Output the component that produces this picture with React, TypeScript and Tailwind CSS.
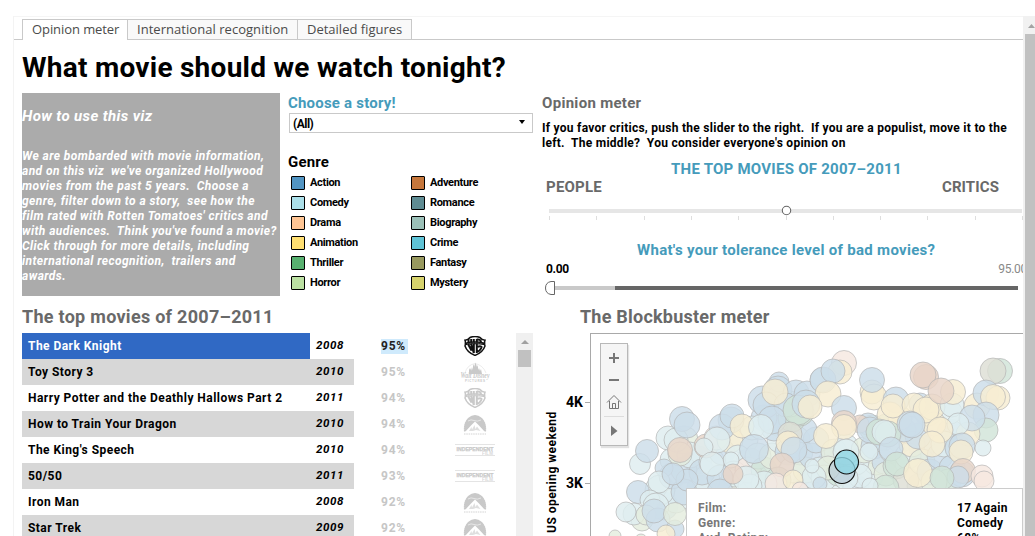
import type { ReactNode } from "react";

type Tone = "b" | "l" | "y" | "t" | "g" | "p" | "k" | "o";
type Bubble = [number, number, number, Tone];

const tones: Record<Tone, string> = {
  b: "#c6d9e6",
  l: "#dbebee",
  y: "#f7ebcd",
  t: "#e5cfc1",
  g: "#cbe1d3",
  p: "#e0eadb",
  k: "#f5e5dd",
  o: "#d9dacf",
};

const bubbles: Bubble[] = [
  // back layer
  [700, 488, 13, "b"], [728, 488, 13, "l"], [742, 486, 13, "p"], [756, 478, 13, "l"], [806, 484, 13, "b"],
  [830, 490, 13, "l"], [856, 488, 13, "b"], [870, 476, 13, "l"], [876, 462, 13, "p"], [900, 440, 13, "l"],
  [922, 448, 13, "b"], [920, 486, 13, "p"], [950, 432, 13, "b"], [880, 440, 13, "g"], [796, 440, 14, "l"],
  [782, 424, 14, "b"], [744, 440, 14, "l"], [750, 462, 14, "b"], [698, 460, 14, "b"], [706, 480, 14, "l"],
  [672, 460, 12, "l"], [684, 440, 14, "p"], [664, 506, 14, "b"], [676, 500, 13, "l"], [832, 462, 14, "b"],
  [660, 490, 15, "l"], [672, 476, 13, "b"], [684, 470, 13, "b"], [690, 455, 13, "l"], [702, 472, 13, "b"],
  [712, 462, 13, "l"], [722, 452, 13, "b"], [706, 446, 12, "t"], [716, 438, 12, "k"], [730, 440, 13, "y"],
  [738, 458, 13, "l"], [734, 474, 13, "l"], [720, 478, 13, "b"], [748, 470, 13, "k"], [758, 456, 13, "l"],
  [764, 470, 13, "g"], [772, 456, 13, "p"], [780, 440, 13, "l"], [774, 428, 13, "b"], [764, 418, 13, "b"],
  [752, 428, 12, "l"], [788, 452, 13, "b"], [792, 470, 13, "l"], [800, 452, 13, "b"], [806, 470, 13, "p"],
  [812, 456, 13, "b"], [820, 470, 13, "l"], [816, 440, 13, "b"], [804, 430, 13, "b"], [792, 418, 14, "g"],
  [800, 412, 14, "g"], [824, 478, 13, "l"], [834, 452, 13, "p"], [846, 446, 12, "l"], [838, 474, 12, "g"],
  [856, 462, 13, "l"], [864, 450, 13, "p"], [860, 476, 12, "l"], [874, 446, 13, "b"], [884, 462, 12, "b"],
  [886, 474, 12, "p"], [892, 450, 13, "l"], [896, 466, 13, "g"], [908, 456, 13, "l"], [912, 444, 13, "y"],
  [906, 480, 13, "o"], [922, 462, 13, "p"], [930, 472, 13, "b"], [940, 456, 13, "b"], [944, 444, 13, "l"],
  [952, 468, 13, "b"], [948, 482, 13, "g"], [962, 474, 13, "b"], [958, 448, 13, "b"], [934, 482, 13, "p"],
  [918, 436, 13, "b"], [904, 430, 12, "b"], [886, 426, 12, "g"], [872, 428, 13, "g"], [868, 424, 11, "b"],
  [860, 424, 9, "t"], [846, 478, 12, "l"], [778, 480, 13, "g"], [764, 484, 13, "l"], [750, 486, 12, "l"],
  [720, 492, 13, "b"], [684, 492, 13, "b"], [900, 418, 12, "y"], [928, 412, 14, "p"], [950, 412, 12, "l"],
  [934, 424, 12, "y"], [762, 400, 14, "b"], [780, 398, 13, "b"], [790, 404, 13, "l"],
  // upper and left edges
  [779, 382, 10, "b"], [778, 390, 14, "b"], [796, 393, 13, "b"], [807, 394, 13, "b"], [766, 405, 13, "b"],
  [786, 405, 12, "b"], [772, 420, 14, "b"], [798, 410, 15, "g"], [775, 392, 13, "y"], [822, 380, 12, "b"],
  [844, 363, 12.5, "k"], [840, 372, 12, "y"], [823, 380, 13, "b"], [833, 371, 12, "b"], [828, 394, 13, "y"],
  [806, 404, 14, "b"], [810, 407, 12, "y"], [844, 408, 12.5, "b"], [844, 423, 12.5, "t"], [844, 427, 12.5, "y"],
  [826, 436, 12.5, "y"], [872, 392, 12, "y"], [874, 397, 13, "y"], [872, 380, 12.5, "b"],
  [896, 400, 13, "b"], [890, 415, 13, "y"], [893, 406, 12, "y"], [920, 404, 11, "b"], [914, 405, 12, "y"],
  [932, 407, 13, "y"], [926, 410, 13, "y"], [952, 405, 12, "l"], [953, 392, 12.5, "y"], [926, 377, 12.5, "t"],
  [923, 375, 13, "t"], [941, 391, 13, "t"], [1000, 371, 12.5, "g"], [993, 371, 13, "o"], [977, 406, 13, "y"],
  [986, 393, 13, "b"], [998, 398, 12, "y"], [993, 397, 12.5, "y"], [986, 415, 13, "b"], [986, 430, 12, "g"],
  [968, 434, 12, "y"], [972, 418, 13, "b"], [958, 424, 11, "l"], [962, 446, 13, "b"], [961, 452, 12, "y"],
  [983, 448, 8, "l"], [963, 471, 12.5, "t"], [958, 477, 11, "b"], [982, 476, 11, "k"], [984, 481, 10, "k"],
  // dense middle
  [870, 430, 13, "b"], [879, 432, 13, "g"], [888, 434, 13, "g"], [884, 432, 12, "l"], [910, 424, 13, "b"],
  [912, 425, 13, "b"], [940, 430, 13, "y"], [932, 444, 13, "y"], [891, 449, 12, "b"], [897, 464, 12, "g"],
  [869, 452, 9, "l"], [918, 473, 14.5, "y"], [942, 478, 12, "g"], [886, 488, 13, "g"], [846, 452, 13, "l"],
  [828, 468, 12, "p"], [814, 477, 12, "l"], [731, 420, 13, "b"], [722, 427, 13, "b"], [732, 416, 12, "b"],
  [742, 426, 12, "y"], [761, 427, 12.5, "l"], [790, 434, 12, "o"], [788, 443, 12, "y"], [794, 450, 13, "b"],
  [754, 449, 14.5, "b"], [782, 465, 12, "t"], [776, 484, 11, "k"], [793, 480, 10, "y"], [746, 479, 13, "l"],
  [717, 440, 13, "l"], [704, 447, 9, "l"], [731, 460, 8, "l"], [712, 464, 12, "l"], [733, 474, 10, "t"],
  [668, 438, 12, "l"], [676, 440, 12, "l"], [682, 419, 12.5, "b"], [687, 425, 13, "b"], [680, 454, 12, "p"],
  [680, 450, 12.5, "t"], [640, 464, 10.5, "l"], [647, 451, 11.5, "b"], [664, 468, 9, "b"], [687, 480, 11, "b"],
  [659, 482, 11, "l"], [673, 474, 11, "b"], [638, 492, 11.5, "b"], [650, 500, 10, "l"], [656, 506, 13, "l"],
  [642, 520, 11, "p"], [634, 514, 11, "l"], [626, 512, 10, "l"], [646, 515, 10, "p"], [658, 520, 12, "b"],
  [654, 511, 12, "b"], [675, 529, 9, "b"], [675, 514, 11.5, "p"], [666, 534, 9, "y"], [615, 536, 6, "p"],
  [641, 540, 6, "p"], [812, 466, 7, "l"], [820, 484, 7, "b"], [870, 486, 8, "l"], [800, 490, 8, "k"],
];

const studios = {
  warner: (tone: string) => (
    <svg viewBox="0 0 22 20" className={`h-5 w-[22px] ${tone}`} fill="none" stroke="currentColor">
      <path d="M1 4.300Q4.200 4.200 6 1.500Q11-.5 16 1.500Q17.800 4.200 21 4.300Q20 7 21 10Q18.800 16.500 11 19.400Q3.200 16.500 1 10Q2 7 1 4.300Z" strokeWidth="1.500" />
      <path d="M4.500 3V9L7.500 14.500V9L9.800 17V3M7.200 3V9" strokeWidth="2" />
      <path d="M12.800 3V17M12.800 3.500Q17 3 17 6.500M12.800 11Q18 9.500 17.500 11.500Q16.500 14.500 12.800 16" strokeWidth="2" />
      <path d="M1 8Q11 5.500 21 8" strokeWidth="2.800" />
      <path d="M3 8Q11 6 19 8" stroke="#fff" strokeWidth=".6" strokeDasharray="1 .6" opacity=".6" />
    </svg>
  ),
  disney: (tone: string) => (
    <svg viewBox="0 0 30 20" className={`h-5 w-[30px] ${tone}`} fill="currentColor">
      <path d="M5 11Q7 3 15 1.500Q23 3 26 11" fill="none" stroke="currentColor" strokeWidth=".6" opacity=".6" />
      <path d="M9 12V8L10 6L11 8V9L12 5L13 8V4L14 2V5L15.500 .5L17 5V3L18 5V8L19 6L20 9L21 7L22 12Z" />
      <text x=".5" y="16" fontSize="7.500" fontWeight="bold" fontStyle="italic" textLength="29" lengthAdjust="spacingAndGlyphs" fontFamily="Liberation Serif, serif">Walt Disney</text>
      <text x="5" y="19.500" fontSize="3" textLength="20" fontFamily="Liberation Sans, sans-serif">PICTURES</text>
    </svg>
  ),
  paramount: (tone: string) => (
    <svg viewBox="0 0 25 21" className={`h-[21px] w-[25px] ${tone}`} fill="currentColor">
      <path d="M1 17.500Q0 9 5 4Q12-2 19 4Q24 9 23 17.500Z" />
      <path d="M.8 16Q0 8 5 3.300Q12-2.500 19 3.300Q24 8 23.200 16" fill="none" stroke="#fff" strokeWidth=".8" strokeDasharray=".8 1.200" />
      <path d="M2 18L8 11.500L12 7.500L16 11.500L22 18Z" fill="#fff" />
      <path d="M6 17L8.500 13L9 15.500L11.500 11L12.500 15L14 12.500L17.500 17L13 16L10 17Z" opacity=".6" />
      <path d="M5 7Q8 5 11 6.500T18 6" fill="none" stroke="#fff" strokeWidth=".9" opacity=".6" />
      <path d="M1 20H23" stroke="currentColor" strokeDasharray="1.500 .800" opacity=".8" />
    </svg>
  ),
  independent: (tone: string) => (
    <svg viewBox="0 0 40 14" className={`h-3.5 w-10 ${tone}`} fill="currentColor">
      <path d="M.5 1.500H40M.5 12.500H40" stroke="currentColor" strokeDasharray="1 1" />
      <text x="1.500" y="7.500" fontSize="5.500" fontWeight="bold" textLength="37" lengthAdjust="spacingAndGlyphs" fontFamily="Liberation Sans, sans-serif" stroke="currentColor" strokeWidth=".25">INDEPENDENT</text>
      <text x="27" y="11.500" fontSize="4.500" textLength="11" fontFamily="Liberation Sans, sans-serif" opacity=".7">FILM</text>
    </svg>
  ),
};

const movies: { title: string; year: string; score: string; studio: keyof typeof studios }[] = [
  { title: "The Dark Knight", year: "2008", score: "95%", studio: "warner" },
  { title: "Toy Story 3", year: "2010", score: "95%", studio: "disney" },
  { title: "Harry Potter and the Deathly Hallows Part 2", year: "2011", score: "94%", studio: "warner" },
  { title: "How to Train Your Dragon", year: "2010", score: "94%", studio: "paramount" },
  { title: "The King's Speech", year: "2010", score: "94%", studio: "independent" },
  { title: "50/50", year: "2011", score: "93%", studio: "independent" },
  { title: "Iron Man", year: "2008", score: "92%", studio: "paramount" },
  { title: "Star Trek", year: "2009", score: "92%", studio: "paramount" },
];

const genres: [string, string][] = [
  ["Action", "bg-[#5295c3]"], ["Adventure", "bg-[#c6773c]"],
  ["Comedy", "bg-[#abdfe9]"], ["Romance", "bg-[#5f8c93]"],
  ["Drama", "bg-[#ffc594]"], ["Biography", "bg-[#9bc0b8]"],
  ["Animation", "bg-[#ffdf71]"], ["Crime", "bg-[#5fc3d6]"],
  ["Thriller", "bg-[#58b170]"], ["Fantasy", "bg-[#98995f]"],
  ["Horror", "bg-[#bbe0a2]"], ["Mystery", "bg-[#d6d26c]"],
];

function Heading({ children, className = "" }: { children: ReactNode; className?: string }) {
  return <h2 className={`text-[15px] leading-5 font-bold whitespace-nowrap ${className}`}>{children}</h2>;
}

function Tabs() {
  return (
    <nav className="flex h-6 shrink-0 items-stretch border-t border-[#f5f5f5] pt-0.5 font-['Open_Sans',sans-serif] text-[13px] leading-[19px] text-[#4b4b4b]">
      <div className="w-2 border-b border-[#c9c9c9]" />
      <div className="w-[106px] border-x border-t border-[#c9c9c9] bg-white pl-[9px] tracking-[-.08px] whitespace-nowrap">Opinion meter</div>
      <div className="w-[170px] border-y border-r border-[#c9c9c9] bg-[#f9f9f9] pl-[9px] tracking-[.04px] whitespace-nowrap">International recognition</div>
      <div className="w-[114px] border-y border-r border-[#c9c9c9] bg-[#f9f9f9] pl-[9px] whitespace-nowrap">Detailed figures</div>
      <div className="flex-1 border-b border-[#c9c9c9]" />
    </nav>
  );
}

function HowTo() {
  return (
    <section className="h-[203px] w-[258px] shrink-0 overflow-hidden bg-[#ababab] font-bold text-white italic">
      <h2 className="pt-[13px] text-[15px] leading-5 tracking-[.37px]">How to use this viz</h2>
      <p className="mt-[23px] text-xs leading-[15px] tracking-[.43px] whitespace-pre">
        {"We are bombarded with movie information,\nand on this viz  we've organized Hollywood\nmovies from the past 5 years.  Choose a\ngenre, filter down to a story,  see how the\nfilm rated with Rotten Tomatoes' critics and\nwith audiences.  Think you've found a movie?\nClick through for more details, including\ninternational recognition,  trailers and\nawards."}
      </p>
    </section>
  );
}

function Filters() {
  return (
    <section className="ml-2 w-[246px] shrink-0">
      <Heading className="tracking-[.2px] text-[#459bbb]">Choose a story!</Heading>
      <div className="ml-px flex h-5 w-[244px] items-center justify-between border border-[#c9c9c9] pt-px pr-[7px] pl-[3px]">
        <span className="text-xs font-bold tracking-[-.5px]">(All)</span>
        <svg viewBox="0 0 6 4" className="mb-1 h-1 w-1.5"><path d="M0 0H6L3 4Z" /></svg>
      </div>
      <Heading className="mt-[19px] tracking-[.16px]">Genre</Heading>
      <ul className="mt-px grid grid-cols-[120px_1fr] pl-[3px]">
        {genres.map(([name, color]) => (
          <li key={name} className="flex h-5 items-center gap-[5px]">
            <span className={`size-3.5 rounded-[1px] border border-black ${color}`} />
            <span className="text-[11px] font-bold tracking-[-.32px]">{name}</span>
          </li>
        ))}
      </ul>
    </section>
  );
}

function Meter() {
  return (
    <section className="ml-2 flex-1">
      <Heading className="tracking-[.3px] text-[#696969]">Opinion meter</Heading>
      <p className="mt-2 text-xs leading-[15px] font-bold tracking-[.27px] whitespace-pre">
        {"If you favor critics, push the slider to the right.  If you are a populist, move it to the\nleft.  The middle?  You consider everyone's opinion on"}
      </p>
      <Heading className="mt-2 pl-[129px] tracking-[.25px] text-[#459bbb]">THE TOP MOVIES OF 2007–2011</Heading>
      <div className="-mt-0.5 flex justify-between pr-[25px] pl-1 text-[#696969]">
        <Heading className="tracking-[.22px]">PEOPLE</Heading>
        <Heading className="tracking-[.1px]">CRITICS</Heading>
      </div>
      <svg viewBox="0 0 475 18" className="mt-2 ml-[7px] block h-[18px] w-[475px]">
        <rect y="4" width="473" height="4" fill="#e6e6e6" />
        <path d="M.5 11v4M47.500 11v4M95.500 11v4M142.500 11v4M189.500 11v4M237.500 11v4M284.500 11v4M331.500 11v4M378.500 11v4M426.500 11v4M473.500 11v4" stroke="#dedede" />
        <circle cx="237.500" cy="5.500" r="4.200" fill="#fff" stroke="#666" strokeWidth="1.100" />
      </svg>
      <Heading className="mt-[17px] pl-[95px] tracking-[.3px] text-[#459bbb]">What's your tolerance level of bad movies?</Heading>
      <div className="flex justify-between pl-1 text-xs leading-[18px] font-bold tracking-[-.3px]">
        <span>0.00</span>
        <span className="-mr-[3px] font-normal text-[#898989]">95.00</span>
      </div>
      <svg viewBox="0 0 478 16" className="mt-px ml-[2px] block h-4 w-[478px]">
        <rect x="10" y="7" width="61" height="4" fill="#c9c9c9" />
        <rect x="71" y="7" width="403" height="4" fill="#666" />
        <path d="M10.500 2.500V15.500H7Q1.500 14.500 1.500 9T7 2.500Z" fill="#fff" stroke="#666" />
      </svg>
    </section>
  );
}

function MovieTable() {
  return (
    <section className="w-[511px] shrink-0">
      <h2 className="h-[37px] pt-2 text-[18px] leading-[26px] font-bold tracking-[.28px] text-[#696969]">The top movies of 2007–2011</h2>
      <div className="flex">
        <div className="w-[494px]">
          {movies.map((m, i) => {
            const selected = i === 0;
            const stripe = i % 2 ? "bg-[#d7d7d7]" : "bg-white";
            return (
              <div key={m.title} className="flex h-[26px] items-center text-xs font-bold">
                <span className={`h-[26px] w-72 pl-1.5 leading-[26px] tracking-[.46px] whitespace-nowrap ${selected ? "bg-[#3069c4] text-white" : stripe}`}>{m.title}</span>
                <span className={`h-[26px] w-11 pl-1.5 text-[11.5px] leading-[25px] tracking-[.6px] italic ${stripe}`}>{m.year}</span>
                <span className="flex w-[84px] pl-[27px]">
                  <span className={`h-[15px] w-[27px] leading-[15px] tracking-[.8px] ${selected ? "bg-[#cfeafc] text-[#222]" : "text-[#c6c6c6]"}`}>{m.score}</span>
                </span>
                <span className="flex w-[74px] justify-center">{studios[m.studio](selected ? "text-[#111]" : "text-[#c9c9c9]")}</span>
              </div>
            );
          })}
        </div>
        <div className="flex w-[17px] flex-col items-center bg-[#f0f0f0] pt-[7px]">
          <svg viewBox="0 0 8 4" className="h-1 w-2"><path d="M0 4L4 0L8 4Z" fill="#a0a0a0" /></svg>
          <div className="mt-1.5 h-[17px] w-[13px] bg-[#c1c1c1]" />
        </div>
      </div>
    </section>
  );
}

function MapControls() {
  return (
    <div className="absolute top-[9px] left-[9px] flex h-[103px] w-7 flex-col items-center border border-[#b8b8b8] bg-[#f5f5f5] shadow-[1px_2px_1px_#e2e2e2]">
      <svg viewBox="0 0 28 103" className="-m-px h-[103px] w-7 shrink-0" fill="none" stroke="#777">
        <path d="M9 15H19M14 10V20M9 37H19" strokeWidth="2" />
        <path d="M7 59.500L14 52.500L21 59.500M9.500 58V65.500H18.500V58M12.500 65V60.500H15.500V65" />
        <path d="M4 73.500H24" stroke="#ddd" />
        <path d="M11 82.500V93L17.500 88Z" fill="#777" stroke="none" />
      </svg>
    </div>
  );
}

function Blockbuster() {
  return (
    <section className="ml-[9px] flex flex-1 flex-col overflow-hidden">
      <h2 className="h-[37px] shrink-0 pt-2 pl-[38px] text-[18px] leading-[26px] font-bold tracking-[.22px] text-[#696969]">The Blockbuster meter</h2>
      <div className="flex flex-1">
        <div className="flex w-12 justify-between pt-[78px] text-[12px] font-bold">
          <span className="ml-[2px] h-[122px] rotate-180 text-xs leading-4 tracking-[.5px] whitespace-nowrap [writing-mode:vertical-rl]">US opening weekend</span>
          <div className="-mt-[18px] flex flex-col gap-[63px] text-sm leading-[18px]">
            <span className="flex items-center gap-0.5">4K<i className="h-px w-[5px] bg-[#aaa]" /></span>
            <span className="flex items-center gap-0.5">3K<i className="h-px w-[5px] bg-[#aaa]" /></span>
          </div>
        </div>
        <div className="relative h-[230px] flex-1 border-t border-l border-[#a9a9a9]">
          <svg viewBox="591 334 432 228" className="block h-[228px] w-[432px]">
            <g opacity=".88">
              {bubbles.map(([x, y, r, tone], i) => (
                <circle key={i} cx={x} cy={y} r={r} fill={tones[tone]} fillOpacity=".82" stroke="#a8a8a8" strokeOpacity=".75" strokeWidth=".9" />
              ))}
            </g>
            <circle cx="842" cy="470.500" r="13" fill="#b9ccd8" fillOpacity=".7" stroke="#111" strokeWidth="1.100" />
            <circle cx="846.500" cy="462" r="12" fill="#8ed6e3" fillOpacity=".8" stroke="#111" strokeWidth="1.100" />
          </svg>
          <MapControls />
          <div className="absolute top-[154px] left-[95px] h-20 w-[337px] border border-[#ccc] bg-white pt-3 pl-[11px]">
            <dl className="grid grid-cols-[259px_1fr] text-xs leading-[15px] font-bold tracking-[.35px] [&>dt]:text-[#777]">
              <dt>Film:</dt><dd>17 Again</dd>
              <dt>Genre:</dt><dd>Comedy</dd>
              <dt>Aud. Rating:</dt><dd>68%</dd>
            </dl>
          </div>
        </div>
      </div>
    </section>
  );
}

export default function App() {
  return (
    <main className="flex h-[536px] w-[1035px] overflow-hidden bg-white pt-4 pl-[13px] font-[Roboto,sans-serif] text-black">
      <div className="flex w-[1010px] shrink-0 flex-col overflow-hidden border-l border-[#f3f3f3]">
        <Tabs />
        <h1 className="h-[53px] shrink-0 pt-[11px] pl-2 text-[28px] leading-[34px] font-bold tracking-[.26px]">What movie should we watch tonight?</h1>
        <div className="flex h-[203px] shrink-0 pl-2">
          <HowTo />
          <Filters />
          <Meter />
        </div>
        <div className="flex flex-1 overflow-hidden pl-2">
          <MovieTable />
          <Blockbuster />
        </div>
      </div>
      <div className="flex w-3 shrink-0 flex-col bg-[#f1f1f1] pt-2">
        <svg viewBox="0 0 7 4" className="ml-[5px] h-1 w-[7px] shrink-0"><path d="M0 4L3.500 0L7 4Z" fill="#a3a3a3" /></svg>
        <div className="mt-1.5 ml-0.5 flex-1 bg-[#c1c1c1]" />
      </div>
    </main>
  );
}
